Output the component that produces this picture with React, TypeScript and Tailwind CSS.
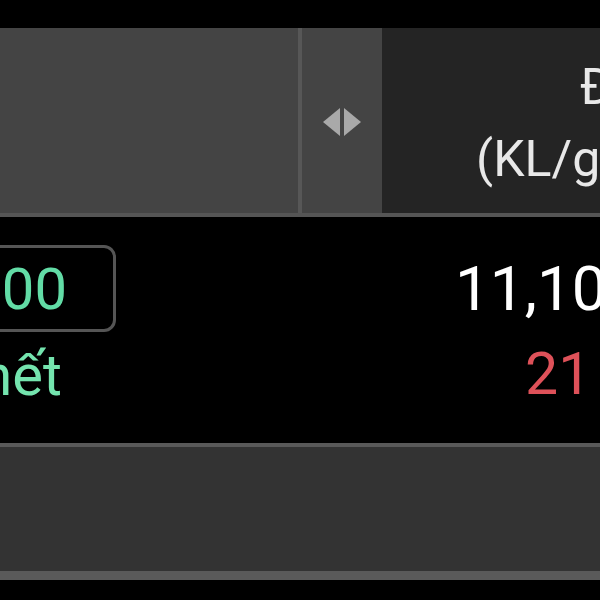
import React from "react";

function ArrowsIcon() {
  return (
    <svg width="38" height="28" viewBox="0 0 38 28" fill="#a9a9a9">
      <polygon points="17,0 17,28 0,14" />
      <polygon points="21,0 21,28 38,14" />
    </svg>
  );
}

export default function App() {
  return (
    <div
      className="w-[600px] h-[600px] overflow-hidden bg-black flex flex-col"
      style={{ fontFamily: "Roboto, 'Noto Sans', sans-serif" }}
    >
      <div className="h-[28px] shrink-0 bg-black" />
      {/* header */}
      <div className="h-[185px] shrink-0 flex">
        <div className="w-[298px] shrink-0 bg-[#444444]" />
        <div className="w-[4px] shrink-0 bg-[#575757]" />
        <div className="w-[80px] shrink-0 bg-[#444444] flex items-center justify-center pt-[2px]">
          <ArrowsIcon />
        </div>
        <div className="flex-1 bg-[#242424] overflow-hidden flex items-center">
          <div className="shrink-0 w-[190px] ml-[85px] text-right text-[50px] leading-[72px] text-[#e8e8e8] whitespace-nowrap pt-[4px]">
            <div>Đặt</div>
            <div>(KL/giá)</div>
          </div>
        </div>
      </div>
      <div className="h-[4px] shrink-0 bg-[#555555]" />
      {/* data row */}
      <div className="h-[226px] shrink-0 flex overflow-hidden">
        <div className="w-[116px] shrink-0 pt-[28px] flex flex-col items-end">
          <div className="w-[180px] shrink-0 h-[87px] border-[3px] border-[#555555] rounded-[12px] flex items-center justify-end pr-[46px] text-[58px] leading-none text-[#62dca6] whitespace-nowrap">
            1,000
          </div>
          <div className="h-[82px] w-[200px] shrink-0 flex items-center justify-end pr-[54px] text-[58px] leading-none text-[#74e4ae] whitespace-nowrap pt-[4px]">
            Khớp hết
          </div>
        </div>
        <div className="w-[339px] shrink-0" />
        <div className="flex-1 pt-[28px] flex flex-col">
          <div className="h-[87px] flex items-center text-[62px] leading-none text-white whitespace-nowrap">
            11,100
          </div>
          <div className="h-[82px] flex items-center pl-[70px] text-[59px] leading-none text-[#de5159] whitespace-nowrap">
            21
          </div>
        </div>
      </div>
      <div className="h-[4px] shrink-0 bg-[#595959]" />
      <div className="h-[124px] shrink-0 bg-[#333333]" />
      <div className="h-[9px] shrink-0 bg-[#5a5a5a]" />
      <div className="flex-1 bg-black" />
    </div>
  );
}
